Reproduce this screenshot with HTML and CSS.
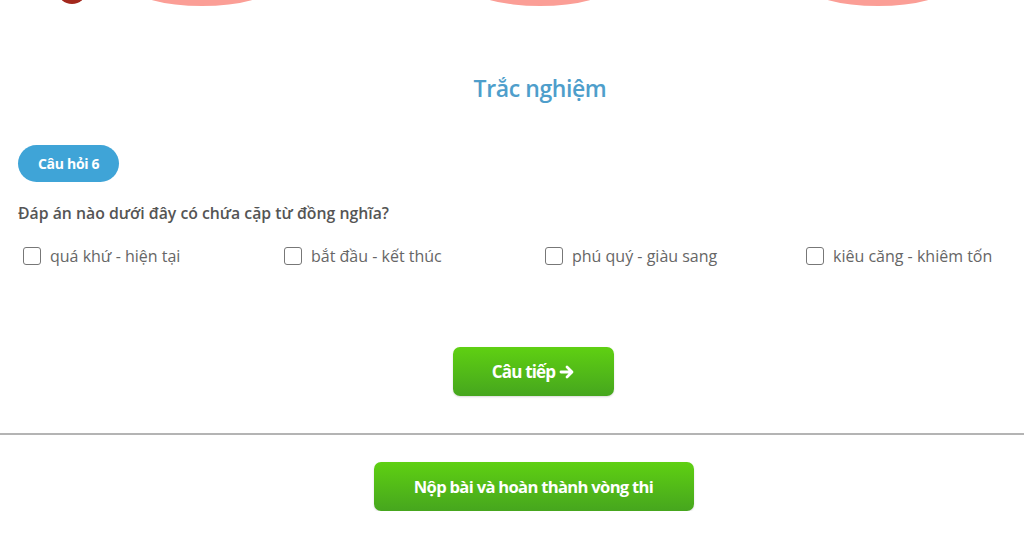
FILE: index.html
```html
<!DOCTYPE html>
<html lang="vi">
<head>
    <meta charset="UTF-8">
    <meta name="viewport" content="width=device-width, initial-scale=1.0">
    <title>Trắc nghiệm</title>
    <link rel="stylesheet" href="styles.css">
</head>
<body>

    <div class="top-strip">
        <span class="red-dot"></span>
        <div class="plates">
            <span class="plate"></span>
            <span class="plate"></span>
            <span class="plate"></span>
        </div>
    </div>

    <div class="quiz">
        <h2 class="quiz-title">Trắc nghiệm</h2>

        <span class="badge">Câu hỏi 6</span>

        <p class="question">Đáp án nào dưới đây có chứa cặp từ đồng nghĩa?</p>

        <div class="answers">
            <label class="answer"><input type="checkbox"> quá khứ - hiện tại</label>
            <label class="answer"><input type="checkbox"> bắt đầu - kết thúc</label>
            <label class="answer"><input type="checkbox"> phú quý - giàu sang</label>
            <label class="answer"><input type="checkbox"> kiêu căng - khiêm tốn</label>
        </div>
    </div>

    <div class="actions">
        <button class="btn-green btn-next">Câu tiếp
            <svg width="16" height="16" viewBox="0 0 16 16"><path d="M2 8h10.5M8 3l5 5-5 5" fill="none" stroke="#fff" stroke-width="2.8" stroke-linecap="round" stroke-linejoin="round"/></svg>
        </button>
    </div>

    <hr class="divider">

    <div class="actions">
        <button class="btn-green btn-submit">Nộp bài và hoàn thành vòng thi</button>
    </div>

</body>
</html>
```

FILE: styles.css
```css
html, body {
    margin: 0;
    padding: 0;
    overflow: hidden;
    background: #fff;
    font-family: "Open Sans", "Noto Sans", sans-serif;
}

.top-strip {
    position: relative;
    height: 8px;
    overflow: hidden;
}

.red-dot {
    position: absolute;
    left: 58px;
    top: -22px;
    width: 28px;
    height: 26px;
    border-radius: 50%;
    background: #a3281d;
}

.plates {
    width: 1044px;
    margin-left: 18px;
    display: flex;
    justify-content: center;
    gap: 198px;
}

.plate {
    width: 140px;
    height: 40px;
    margin-top: -34px;
    border-radius: 50%;
    background: #fb9e96;
}

.quiz {
    width: 1044px;
    margin-left: 18px;
}

.quiz-title {
    margin: 63px 0 0;
    text-align: center;
    font-size: 23px;
    font-weight: 600;
    line-height: 34px;
    color: #4e9ecb;
    letter-spacing: -0.4px;
}

.badge {
    display: inline-block;
    margin-top: 40px;
    padding: 0 20px;
    height: 37px;
    line-height: 37px;
    border-radius: 19px;
    background: #3fa4d7;
    color: #fff;
    font-size: 14px;
    font-weight: 700;
    letter-spacing: -0.3px;
}

.question {
    margin: 20px 0 0;
    font-size: 15.8px;
    font-weight: 600;
    line-height: 22px;
    color: #555;
}

.answers {
    display: grid;
    grid-template-columns: repeat(4, 261px);
    margin-top: 21px;
}

.answer {
    display: flex;
    align-items: center;
    gap: 9px;
    padding-left: 5px;
    font-size: 16px;
    line-height: 22px;
    color: #666;
}

.answer input {
    margin: 0;
    width: 18px;
    height: 18px;
    appearance: none;
    border: 1px solid #777;
    border-radius: 3px;
    background: #fff;
}

.actions {
    padding-left: 43px;
    text-align: center;
}

.btn-green {
    height: 49px;
    border: none;
    border-radius: 7px;
    background: linear-gradient(#5fd012, #46a61e);
    box-shadow: 0 1px 2px rgba(0, 0, 0, 0.15);
    color: #fff;
    font-family: "Open Sans", "Noto Sans", sans-serif;
    font-size: 16px;
    font-weight: 700;
    letter-spacing: -0.6px;
    cursor: pointer;
}

.btn-next {
    margin-top: 80px;
    width: 161px;
    display: inline-flex;
    align-items: center;
    justify-content: center;
    gap: 4px;
    font-size: 17px;
    letter-spacing: -0.8px;
}

.btn-submit {
    width: 320px;
    font-size: 16.6px;
    letter-spacing: -0.7px;
}

.divider {
    margin: 37px 0 27px;
    border: none;
    border-top: 2px solid #b4b4b4;
}
```
